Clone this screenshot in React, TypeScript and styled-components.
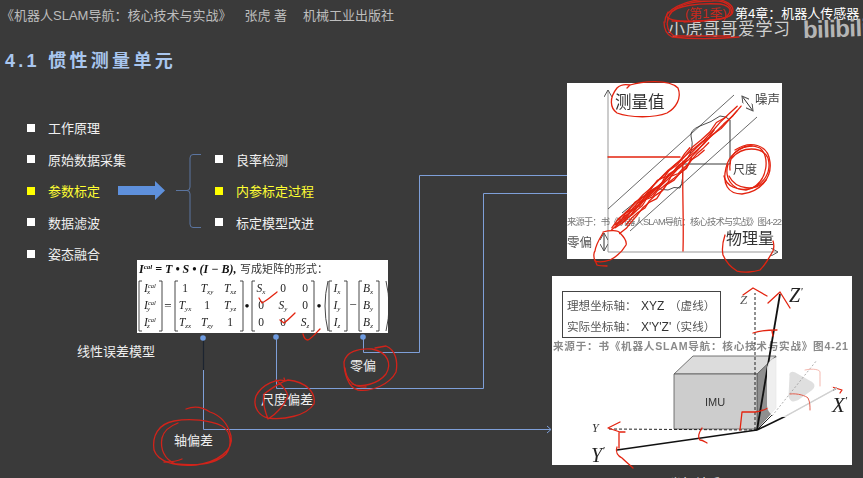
import React from "react";
import styled, { createGlobalStyle } from "styled-components";

const CJK = `"Liberation Sans", "Noto Sans CJK SC", sans-serif`;
const SERIF = `"Liberation Serif", "Noto Sans CJK SC", serif`;

const Global = createGlobalStyle`
  html, body { margin: 0; padding: 0; background: #3a3a3a; }
`;

const Slide = styled.div`
  position: relative;
  width: 863px;
  height: 478px;
  overflow: hidden;
  background: #3a3a3a;
  font-family: ${CJK};
  color: #f2f2f2;
`;

const Header = styled.header`
  display: flex;
  align-items: center;
  height: 28px;
  padding-left: 1px;
  font-size: 13px;
  color: #bdbdbd;
  white-space: nowrap;
`;

const HeaderPart = styled.span<{ $gap?: number }>`
  margin-left: ${(p) => p.$gap ?? 0}px;
`;

const Title = styled.h1`
  margin: 21px 0 0 5px;
  height: 24px;
  font-size: 18px;
  line-height: 24px;
  font-weight: 700;
  letter-spacing: 3.3px;
  color: #a9c6ef;
  white-space: pre;
`;

const Outline = styled.section`
  display: flex;
  margin-top: 39px;
  padding-left: 27px;
`;

const ItemList = styled.ul<{ $width?: number }>`
  list-style: none;
  margin: 0;
  padding: 0;
  flex: none;
  width: ${(p) => (p.$width ? `${p.$width}px` : "auto")};
  align-self: center;
`;

const Item = styled.li<{ $on?: boolean }>`
  display: flex;
  align-items: center;
  height: 31.5px;
  font-size: 13px;
  white-space: nowrap;
  color: ${(p) => (p.$on ? "#ffff33" : "#f0f0f0")};
  &::before {
    content: "";
    flex: none;
    width: 8px;
    height: 8px;
    margin-right: 13px;
    background: ${(p) => (p.$on ? "#ffff00" : "#ffffff")};
  }
`;

const ArrowIcon = styled.svg`
  align-self: center;
  width: 47px;
  height: 19px;
  flex: none;
`;

const Bracket = styled.svg`
  align-self: center;
  width: 25px;
  height: 74px;
  margin: 0 14px 0 11px;
  flex: none;
`;

const Canvas = styled.svg`
  position: absolute;
  left: 0;
  top: 0;
  width: 863px;
  height: 478px;
  pointer-events: none;
`;

const Figure = styled.svg<{ $x: number; $y: number; $w: number; $h: number }>`
  position: absolute;
  left: ${(p) => p.$x}px;
  top: ${(p) => p.$y}px;
  width: ${(p) => p.$w}px;
  height: ${(p) => p.$h}px;
  background: #fff;
  filter: blur(0.35px);
`;

const Label = styled.span<{ $x: number; $y: number; $size?: number }>`
  position: absolute;
  left: ${(p) => p.$x}px;
  top: ${(p) => p.$y}px;
  font-size: ${(p) => p.$size ?? 13}px;
  line-height: 18px;
  color: #eeeeee;
  white-space: nowrap;
`;

const Chapter = styled(Label)`
  color: #ffffff;
`;

const Season = styled(Label)`
  color: #c9281c;
`;

const Channel = styled(Label)`
  color: #cfcfcf;
  letter-spacing: 0.5px;
`;

const Logo = styled(Label)`
  font-family: "Liberation Sans", sans-serif;
  font-weight: 700;
  color: #b5b5b5;
  letter-spacing: -0.6px;
  transform: rotate(-2deg);
`;

const RED = "#e3230f";
const WIRE = "#7e9fd8";

/* --------- chart figure (origin 567,83) ---------- */
const ChartFigure = () => (
  <Figure $x={567} $y={83} $w={215} $h={176} viewBox="567 83 215 176">
    <defs>
      <marker id="chev" viewBox="0 0 8 8" refX="7" refY="4" markerWidth="8" markerHeight="8" orient="auto-start-reverse" markerUnits="userSpaceOnUse">
        <path d="M0 0 L7 4 L0 8" fill="none" stroke="#555" strokeWidth="1" />
      </marker>
    </defs>
    <g fontFamily={CJK}>
      <line x1="608" y1="252" x2="608" y2="90" stroke="#999" strokeWidth="1" markerEnd="url(#chev)" />
      <line x1="608" y1="252" x2="778" y2="252" stroke="#999" strokeWidth="1" markerEnd="url(#chev)" />
      <line x1="608" y1="209" x2="734" y2="95" stroke="#444" strokeWidth="0.8" />
      <line x1="630" y1="231" x2="757" y2="117" stroke="#444" strokeWidth="0.8" />
      <path d="M682 164 H730 V120" fill="none" stroke="#222" strokeWidth="0.9" />
      <path d="M622 213 Q640 198 655 188 Q664 190 668 190 Q674 186 680 188 Q684 180 682 165 M686 160 Q695 150 691 136 Q690 130 700 126 Q712 122 720 116 Q726 116 730 120" fill="none" stroke="#222" strokeWidth="0.8" />
      <line x1="742" y1="96" x2="753" y2="111" stroke="#333" strokeWidth="1" markerStart="url(#chev)" markerEnd="url(#chev)" />
      <line x1="604" y1="233" x2="604" y2="251" stroke="#333" strokeWidth="1" markerStart="url(#chev)" markerEnd="url(#chev)" />
      <text x="615" y="108" fontSize="16.5" fill="#333">测量值</text>
      <text x="755" y="104" fontSize="12.5" fill="#444">噪声</text>
      <text x="733" y="174" fontSize="12" fill="#444">尺度</text>
      <text x="567" y="225" fontSize="9.4" fill="#777" textLength="215">来源于：书《机器人SLAM导航：核心技术与实战》图4-22</text>
      <text x="567" y="247" fontSize="12.5" fill="#555">零偏</text>
      <text x="726" y="244" fontSize="16" fill="#333">物理量</text>
    </g>
  </Figure>
);

/* --------- IMU figure (origin 552,276) ---------- */
const ImuFigure = () => (
  <Figure $x={552} $y={276} $w={300} $h={189} viewBox="552 276 300 189">
    <g fontFamily={CJK}>
      <rect x="562.5" y="291.5" width="158" height="46" fill="#fff" stroke="#444" />
      <text x="567" y="310" fontSize="11.6" fill="#555">理想坐标轴：</text>
      <text x="641" y="310" fontSize="12" fill="#333">XYZ</text>
      <text x="669" y="310" fontSize="11.6" fill="#555">（虚线）</text>
      <text x="567" y="331" fontSize="11.6" fill="#555">实际坐标轴：</text>
      <text x="641" y="331" fontSize="12" fill="#333">X'Y'Z'</text>
      <text x="669" y="331" fontSize="11.6" fill="#555">（实线）</text>
      <text x="553" y="350" fontSize="10.6" fontWeight="700" fill="#8a8a8a" textLength="295">来源于：书《机器人SLAM导航：核心技术与实战》图4-21</text>
      <path d="M674 374 L693 356 H776 L757 374 Z" fill="#dcdcdc" stroke="#555" strokeWidth="0.8" />
      <path d="M757 374 L776 356 V408 L757 429 Z" fill="#8f8f8f" stroke="#555" strokeWidth="0.6" />
      <path d="M674 374 H757 V429 H674 Z" fill="#cdcdcd" stroke="#555" strokeWidth="0.8" />
      <text x="715" y="406" fontSize="11" fill="#333" textAnchor="middle">IMU</text>
      <line x1="755" y1="430" x2="755" y2="293" stroke="#222" strokeWidth="1" strokeDasharray="3 2" />
      <line x1="757" y1="430" x2="608" y2="429" stroke="#222" strokeWidth="1" strokeDasharray="3 2" />
      <line x1="757" y1="430" x2="772" y2="415" stroke="#222" strokeWidth="1" />
      <line x1="757" y1="430" x2="780" y2="294" stroke="#111" strokeWidth="1.8" />
      <line x1="757" y1="430" x2="617" y2="450" stroke="#111" strokeWidth="1.6" />
      <line x1="757" y1="430" x2="786" y2="416" stroke="#111" strokeWidth="1.6" />
      <line x1="786" y1="416" x2="837" y2="388" stroke="#111" strokeWidth="1.4" />
      <g fontFamily={SERIF} fontStyle="italic">
        <text x="740" y="304" fontSize="13" fill="#555">Z</text>
        <text x="789" y="302" fontSize="20" fill="#222">Z<tspan fontSize="11" dy="-7">'</tspan></text>
        <text x="592" y="432" fontSize="12" fill="#333">Y</text>
        <text x="591" y="462" fontSize="20" fill="#222">Y<tspan fontSize="11" dy="-8">'</tspan></text>
        <text x="832" y="412" fontSize="21" fill="#222">X<tspan fontSize="11" dy="-8">'</tspan></text>
      </g>
    </g>
  </Figure>
);

/* --------- formula figure (origin 137,260) ---------- */
const bracketPath = (x: number, dir: number, top = 281, bot = 331) =>
  `M${x + 3 * dir} ${top} H${x} V${bot} H${x + 3 * dir}`;

const Cell = ({ x, y, t, s }: { x: number; y: number; t: string; s?: string }) => (
  <text x={x} y={y} textAnchor="middle" fontSize="11.5" fill="#222" fontStyle={s !== undefined || /[A-Z]/.test(t) ? "italic" : "normal"}>
    {t}
    {s ? <tspan fontSize="7" dy="2">{s}</tspan> : null}
  </text>
);

const FormulaFigure = () => {
  const rows = [292, 309, 326];
  const matrixT: [string, string?][][] = [
    [["1"], ["T", "xy"], ["T", "xz"]],
    [["T", "yx"], ["1"], ["T", "yz"]],
    [["T", "zx"], ["T", "zy"], ["1"]],
  ];
  const matrixS: [string, string?][][] = [
    [["S", "x"], ["0"], ["0"]],
    [["0"], ["S", "y"], ["0"]],
    [["0"], ["0"], ["S", "z"]],
  ];
  const tx = [185, 207, 230];
  const sx = [261, 283, 305];
  const axis = ["x", "y", "z"];
  return (
    <Figure $x={137} $y={260} $w={251} $h={73} viewBox="137 260 251 73">
      <g fontFamily={SERIF}>
        <text x="139" y="273" fontSize="12" fontWeight="700" fontStyle="italic" fill="#111">
          I<tspan fontSize="7" dy="-4">cal</tspan><tspan dy="4"> = T • S • (I − B),</tspan>
        </text>
        <text x="240" y="273" fontSize="11" fill="#333" fontFamily={CJK}>写成矩阵的形式：</text>
        <g fill="none" stroke="#333" strokeWidth="0.9">
          <path d={bracketPath(139, 1)} />
          <path d={bracketPath(162, -1)} />
          <path d={bracketPath(175, 1)} />
          <path d={bracketPath(243, -1)} />
          <path d={bracketPath(252, 1)} />
          <path d={bracketPath(314, -1)} />
          <path d={bracketPath(329, 1)} />
          <path d={bracketPath(347, -1)} />
          <path d={bracketPath(359, 1)} />
          <path d={bracketPath(379, -1)} />
          <path d="M328 281 Q322 306 328 331 M386 281 Q392 306 386 331" />
        </g>
        {rows.map((y, i) => (
          <React.Fragment key={y}>
            <text x="150" y={y} textAnchor="middle" fontSize="11.5" fontStyle="italic" fill="#222">
              I<tspan fontSize="6.5" dy="-4">cal</tspan><tspan fontSize="7" dy="6" dx="-9">{axis[i]}</tspan>
            </text>
            {matrixT[i].map(([t, s], j) => (
              <Cell key={j} x={tx[j]} y={y} t={t} s={s} />
            ))}
            {matrixS[i].map(([t, s], j) => (
              <Cell key={j} x={sx[j]} y={y} t={t} s={s} />
            ))}
            <Cell x={337} y={y} t="I" s={axis[i]} />
            <Cell x={368} y={y} t="B" s={axis[i]} />
          </React.Fragment>
        ))}
        <text x="168" y="310" textAnchor="middle" fontSize="13" fill="#222">=</text>
        <text x="247" y="310" textAnchor="middle" fontSize="13" fontWeight="700" fill="#111">•</text>
        <text x="319" y="310" textAnchor="middle" fontSize="13" fontWeight="700" fill="#111">•</text>
        <text x="353" y="309" textAnchor="middle" fontSize="13" fill="#222">−</text>
      </g>
    </Figure>
  );
};

/* --------- wires ---------- */
const Wires = () => (
  <Canvas viewBox="0 0 863 478">
    <g fill="none" stroke={WIRE} strokeWidth="1">
      <path d="M203.5 338 V429.5 H551" />
      <path d="M276.5 337 V388.5 H483.5 V193.5 H589" />
      <path d="M363.5 337 V352.5 H419.5 V175.5 H585" />
      <path d="M547 426 L551 429.5 L547 433 M585 190 L589 193.5 L585 197 M581 172 L585 175.5 L581 179" />
    </g>
    <line x1="203.5" y1="340" x2="203.5" y2="370" stroke="#1c2430" strokeWidth="1.2" />
    <g fill="#6e9be0">
      <circle cx="203" cy="338" r="2.8" />
      <circle cx="276" cy="337" r="2.8" />
      <circle cx="363" cy="337" r="2.8" />
    </g>
  </Canvas>
);

/* --------- red pen strokes ---------- */
const inkDark = [
  // season scribble
  "M668 20 C670 6 690 1 712 1 C728 0 733 8 731 14 C729 20 700 22 680 21 C670 20 664 18 668 12",
  "M665 22 C664 10 684 0 708 -1 C726 -2 736 6 732 14 C728 20 704 21 684 22",
  "M670 14 C676 5 700 3 720 4 C732 6 732 12 726 17 C716 21 690 22 672 21",
  "M664 22 C664 28 666 34 672 37 C690 39 716 39 739 37",
  "M668 18 C666 26 668 32 674 36 C690 36 712 36 730 36",
  // zero-bias group
  "M375 348 L386 346 C396 350 398 362 396 372 C390 384 372 392 358 390 C348 388 344 372 344 362 C346 352 358 348 372 349 C388 352 392 364 386 374 C378 384 362 388 352 384",
  "M345 368 C346 380 354 388 366 387",
  // scale group
  "M284 378 L285 381 C278 378 262 384 256 396 C252 408 260 416 268 418 C284 420 306 416 314 404 C316 392 306 382 288 380 C280 382 272 388 264 394 C262 404 266 414 268 419 C276 414 284 406 288 396 C286 388 280 384 276 380",
  // axis group
  "M186 409 C196 405 204 408 210 412 C222 416 228 424 231 436 C234 450 218 462 196 465 C176 467 158 462 154 450 C152 436 158 424 174 421 C190 418 210 420 222 426 C232 432 232 446 226 454 C216 464 196 466 176 464 C164 460 160 448 162 438 C164 430 170 426 178 423",
  "M182 459 C176 462 170 462 164 462",
];

const inkPaper = [
  // checks on the matrix
  "M259 298 L262 303 C268 300 272 296 277 292",
  "M280 320 L284 323 C288 320 292 316 295 313",
  "M303 334 C304 338 306 340 308 340 C312 338 316 333 320 329",
  // value ring
  "M627 88 L630 85 C640 82 668 78 678 88 C682 98 676 108 667 113 C655 118 630 118 617 113 C610 108 609 98 617 88 C620 85 625 84 630 85",
  // scale rings
  "M735 150 C750 140 768 144 770 162 C772 178 760 192 742 194 C728 194 722 184 726 168 C728 156 740 146 752 146",
  "M730 170 C728 150 746 142 760 148 C770 156 768 180 752 188 C738 192 726 186 724 176",
  "M732 158 C742 146 762 146 768 158 C772 172 764 186 746 190 C732 190 724 178 728 164",
  "M729 176 C736 190 756 192 766 180",
  // zero ring
  "M603 232 C610 230 618 230 620 233 C625 238 627 242 626 245 C622 252 616 257 610 260 C604 262 598 262 595 261 C593 256 594 252 595 251 C596 244 600 238 603 233",
  "M595 260 L597 265 C600 266 604 266 607 266",
  // quantity ring
  "M725 235 C722 244 722 250 723 255 C726 262 732 268 737 271 C744 273 754 272 760 270 C766 264 770 256 773 251 C774 248 774 244 773 241",
  // horizontal & vertical traces
  "M608 157 H680",
  "M683 161 C682 190 684 220 683 251",
  // imu pen marks
  "M743 295 L753 288 L767 296",
  "M768 303 L780 292 L790 308",
  "M753 333 C762 330 770 330 777 330 M772 331 L773 336",
  "M740 430 L742 412 L755 412 C760 412 764 410 768 408",
  "M620 422 L608 428 L620 432 L625 432 M619 432 V448",
  "M617 447 C615 452 618 456 622 458 C626 462 630 465 633 468",
  "M702 428 C698 434 698 438 700 440 C703 440 705 442 707 443",
  "M832 387 L842 390 L840 393",
];

/* the band of hand-drawn strokes along the trend: a fixed pseudo-random jitter */
const jag = (seed: number, x0: number, y0: number, x1: number, y1: number, spread: number) => {
  let s = seed * 9301 + 49297;
  const rnd = () => {
    s = (s * 9301 + 49297) % 233280;
    return s / 233280 - 0.5;
  };
  const steps = 14;
  const pts: string[] = [];
  const base = rnd() * spread;
  for (let i = 0; i <= steps; i++) {
    const t = i / steps;
    const off = base + rnd() * 2.4;
    pts.push(`${(x0 + (x1 - x0) * t + off).toFixed(1)} ${(y0 + (y1 - y0) * t + off).toFixed(1)}`);
  }
  return `M${pts.join(" L")}`;
};

const trend = [
  jag(1, 615, 228, 742, 107, 6),
  jag(2, 618, 226, 738, 112, 8),
  jag(3, 613, 229, 728, 118, 8),
  jag(4, 622, 224, 742, 111, 10),
  jag(5, 616, 230, 700, 146, 9),
  jag(6, 620, 222, 690, 156, 10),
  jag(7, 612, 230, 684, 160, 10),
  jag(8, 630, 216, 716, 132, 9),
  jag(9, 626, 222, 680, 170, 12),
  jag(10, 618, 228, 694, 152, 7),
  jag(11, 624, 222, 706, 140, 7),
];

const Ink = () => (
  <Canvas viewBox="0 0 863 478">
    <g fill="none" strokeLinecap="round" strokeLinejoin="round">
      <g stroke="#d1231a" strokeWidth="1.3">
        {inkDark.map((d) => (
          <path key={d} d={d} />
        ))}
      </g>
      <g stroke={RED} strokeWidth="1.3">
        {inkPaper.map((d) => (
          <path key={d} d={d} />
        ))}
        {trend.map((d) => (
          <path key={d} d={d} strokeWidth="1.3" />
        ))}
      </g>
    </g>
  </Canvas>
);

/* --------- translucent player mark ---------- */
const PlayerMark = () => (
  <Canvas viewBox="0 0 863 478">
    <g fill="#fff" opacity="0.86">
      <path d="M783 358 L790 352 L797 358 Z M811 358 L818 352 L824 358 Z" />
      <rect x="767" y="357" width="66" height="60" rx="12" />
    </g>
    <path d="M791 376 Q790 372 795 374 L811 383 Q815 386 811 389 L797 399 Q791 402 790 396 Z" fill="#dcdcdc" stroke="#dcdcdc" strokeWidth="3" strokeLinejoin="round" opacity="0.9" />
    <line x1="772" y1="416" x2="817" y2="360" stroke="#999" strokeWidth="0.8" strokeDasharray="2 2" />
    <line x1="786" y1="416" x2="837" y2="388" stroke="#d0d0d0" strokeWidth="1.4" />
    <g fill="none" strokeLinecap="round">
      <path d="M790 394 C798 393 806 396 808 398 C810 402 810 406 810 410" stroke="#e3604f" strokeWidth="1" />
      <path d="M805 370 C814 368 820 370 820 372 C820 378 820 382 820 386" stroke="#f2b0a6" strokeWidth="0.9" />
    </g>
  </Canvas>
);

const primary = ["工作原理", "原始数据采集", "参数标定", "数据滤波", "姿态融合"];
const secondary = ["良率检测", "内参标定过程", "标定模型改进"];

export default function App() {
  return (
    <Slide>
      <Global />
      <Header>
        <HeaderPart>《机器人SLAM导航：核心技术与实战》</HeaderPart>
        <HeaderPart $gap={13}>张虎 著</HeaderPart>
        <HeaderPart $gap={16}>机械工业出版社</HeaderPart>
      </Header>
      <Title>{"4.1 惯性测量单元"}</Title>
      <Outline>
        <ItemList $width={91}>
          {primary.map((t, i) => (
            <Item key={t} $on={i === 2}>{t}</Item>
          ))}
        </ItemList>
        <ArrowIcon viewBox="0 0 47 19">
          <path d="M0 5 H37 V0 L47 9.5 L37 19 V14 H0 Z" fill="#5e90dc" />
        </ArrowIcon>
        <Bracket viewBox="0 0 25 74">
          <path d="M25 .5 H17 Q14 .5 14 4 V33 Q14 36.5 11 36.5 H0 M11 36.5 Q14 36.5 14 40 V70 Q14 73.5 17 73.5 H25" fill="none" stroke="#5b75a0" strokeWidth="1" />
        </Bracket>
        <ItemList>
          {secondary.map((t, i) => (
            <Item key={t} $on={i === 1}>{t}</Item>
          ))}
        </ItemList>
      </Outline>

      <Season $x={685} $y={5} $size={13}>(第1季)</Season>
      <Chapter $x={735} $y={5} $size={13}>第4章：机器人传感器</Chapter>
      <Channel $x={668} $y={21} $size={17}>小虎哥哥爱学习</Channel>
      <Logo $x={803} $y={20} $size={24}>bilibili</Logo>

      <Wires />
      <FormulaFigure />
      <ChartFigure />
      <ImuFigure />

      <Label $x={77} $y={343}>线性误差模型</Label>
      <Label $x={350} $y={357}>零偏</Label>
      <Label $x={261} $y={391}>尺度偏差</Label>
      <Label $x={174} $y={432}>轴偏差</Label>
      <Label $x={669} $y={475}>坐标轴系</Label>

      <Ink />
      <PlayerMark />
    </Slide>
  );
}
